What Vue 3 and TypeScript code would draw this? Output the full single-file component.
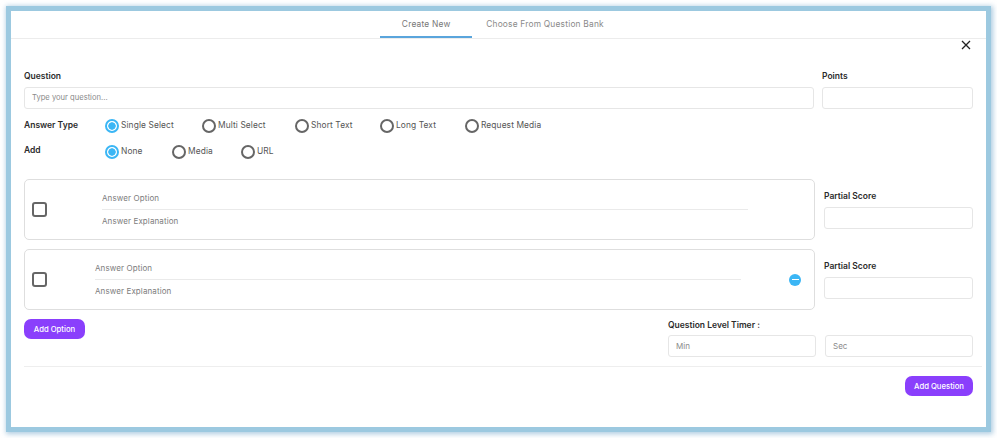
<script setup lang="ts">
const answerTypes = [
  { label: 'Single Select', checked: true, width: 97 },
  { label: 'Multi Select', checked: false, width: 93 },
  { label: 'Short Text', checked: false, width: 85 },
  { label: 'Long Text', checked: false, width: 85 },
  { label: 'Request Media', checked: false, width: 90 }
]
const addTypes = [
  { label: 'None', checked: true, width: 67 },
  { label: 'Media', checked: false, width: 69 },
  { label: 'URL', checked: false, width: 40 }
]
</script>

<template>
  <div class="page">
    <div class="modal">
      <nav class="tabs">
        <div class="tab active">Create New</div>
        <div class="tab">Choose From Question Bank</div>
      </nav>
      <button class="close" aria-label="Close">
        <svg width="10" height="10" viewBox="0 0 10 10"><path d="M1 1l8 8M9 1l-8 8" stroke="#222" stroke-width="1.3" fill="none" /></svg>
      </button>
      <div class="body">
        <div class="q-row">
          <div class="q-main">
            <div class="label">Question</div>
            <div class="input placeholder">Type your question...</div>
          </div>
          <div class="q-points">
            <div class="label">Points</div>
            <div class="input"></div>
          </div>
        </div>

        <div class="choice-row first">
          <div class="label row-label">Answer Type</div>
          <div class="choices">
            <div v-for="t in answerTypes" :key="t.label" class="choice" :style="{ width: t.width + 'px' }">
              <span class="radio" :class="{ on: t.checked }"></span>
              <span class="choice-text">{{ t.label }}</span>
            </div>
          </div>
        </div>
        <div class="choice-row second">
          <div class="label row-label">Add</div>
          <div class="choices">
            <div v-for="t in addTypes" :key="t.label" class="choice" :style="{ width: t.width + 'px' }">
              <span class="radio" :class="{ on: t.checked }"></span>
              <span class="choice-text">{{ t.label }}</span>
            </div>
          </div>
        </div>

        <div class="option-row top">
          <div class="card">
            <span class="check"></span>
            <div class="fields one">
              <div class="field-text">Answer Option</div>
              <div class="field-line"></div>
              <div class="field-text">Answer Explanation</div>
            </div>
          </div>
          <div class="partial">
            <div class="label">Partial Score</div>
            <div class="input"></div>
          </div>
        </div>

        <div class="option-row next">
          <div class="card">
            <span class="check"></span>
            <div class="fields two">
              <div class="field-text">Answer Option</div>
              <div class="field-line"></div>
              <div class="field-text">Answer Explanation</div>
            </div>
            <span class="minus"><i></i></span>
          </div>
          <div class="partial">
            <div class="label">Partial Score</div>
            <div class="input"></div>
          </div>
        </div>

        <div class="foot-row">
          <button class="btn option-btn">Add Option</button>
          <div class="timer">
            <div class="label">Question Level Timer :</div>
            <div class="timer-inputs">
              <div class="input">Min</div>
              <div class="input">Sec</div>
            </div>
          </div>
        </div>

        <div class="divider"></div>
        <div class="submit-row">
          <button class="btn question-btn">Add Question</button>
        </div>
      </div>
    </div>
  </div>
</template>

<style>
html, body { margin: 0; background: #fff; }
</style>

<style scoped>
* { box-sizing: border-box; }
.page {
  width: 997px;
  height: 438px;
  padding: 6px;
  font-family: "Inter", "Liberation Sans", sans-serif;
  color: #333;
  overflow: hidden;
}
.modal {
  position: relative;
  width: 985px;
  height: 426px;
  background: #fff;
  border: 5px solid #9cc9e0;
  box-shadow: 1px 1px 5px 1px rgba(120, 170, 205, 0.6);
}
.tabs {
  height: 28px;
  display: flex;
  justify-content: center;
  border-bottom: 1px solid #ececec;
  padding-left: 1px;
}
.tab {
  font-size: 8.4px;
  line-height: 26px;
  color: #8a8a8a;
  letter-spacing: 0.2px;
  padding: 0 14px;
  height: 27px;
}
.tab.active {
  width: 92px;
  text-align: center;
  padding: 0;
  border-bottom: 2px solid #5aa5dc;
  color: #777;
}
.close {
  position: absolute;
  top: 29px;
  right: 15px;
  width: 10px;
  height: 10px;
  padding: 0;
  border: 0;
  background: none;
  display: flex;
}
.body { padding: 31px 4px 0 13px; }
.label {
  font-size: 8.5px;
  font-weight: 600;
  line-height: 12px;
  color: #2b2b2b;
}
.input {
  height: 22px;
  border: 1px solid #e6e6e6;
  border-radius: 3px;
  font-size: 8px;
  line-height: 20px;
  color: #8a8a8a;
  padding: 0 7px;
  background: #fff;
}
.input.placeholder { font-size: 7.6px; }
.q-row { display: flex; gap: 8px; padding-right: 9px; }
.q-main { width: 790px; }
.q-points { width: 151px; }
.q-row .label { margin-bottom: 5px; }
.choice-row { display: flex; align-items: center; }
.choice-row.first { margin-top: 9px; height: 16px; }
.choice-row.second { margin-top: 10px; height: 16px; }
.row-label { width: 81px; margin-top: -2px; }
.second .row-label { margin-top: -4px; }
.choices { display: flex; }
.choice { display: flex; align-items: center; gap: 2px; }
.radio {
  width: 14px;
  height: 14px;
  border-radius: 50%;
  border: 2px solid #666;
  background: #fff;
  flex: none;
}
.radio.on {
  border-color: #3bb6f5;
  background: radial-gradient(circle, #3bb6f5 0 3.4px, #fff 4px);
}
.choice-text {
  font-size: 8.4px;
  line-height: 12px;
  color: #555;
  letter-spacing: 0.1px;
  margin-top: -3px;
}
.option-row { display: flex; align-items: flex-start; gap: 9px; }
.option-row.top { margin-top: 19px; }
.option-row.next { margin-top: 9px; }
.card {
  width: 791px;
  height: 61px;
  border: 1px solid #dedede;
  border-radius: 5px;
  display: flex;
  align-items: center;
  padding-left: 7px;
}
.check {
  width: 15px;
  height: 15px;
  border: 2px solid #666;
  border-radius: 3px;
  flex: none;
}
.fields { flex: none; }
.fields.one { margin-left: 55px; width: 646px; }
.fields.two { margin-left: 48px; width: 646px; }
.field-text {
  font-size: 8px;
  line-height: 12px;
  color: #7d7d7d;
  letter-spacing: 0.1px;
}
.field-line {
  height: 1px;
  background: #eaeaea;
  margin: 5px 0 5px;
}
.minus {
  width: 12px;
  height: 12px;
  border-radius: 50%;
  background: #3bb6f5;
  margin-left: 48px;
  display: flex;
  align-items: center;
  justify-content: center;
}
.minus i { width: 7px; height: 1.5px; background: #fff; display: block; }
.partial { width: 149px; padding-top: 11px; }
.partial .label { margin-bottom: 5px; }
.foot-row {
  display: flex;
  justify-content: space-between;
  padding-right: 9px;
  margin-top: 9px;
}
.btn {
  background: #8a3ffc;
  color: #fff;
  border: 0;
  border-radius: 7px;
  font-family: inherit;
  font-size: 7.7px;
  font-weight: 500;
  padding: 0;
  height: 20px;
}
.option-btn { width: 61px; }
.question-btn { width: 68px; }
.timer { width: 305px; }
.timer .label { margin-bottom: 4px; }
.timer-inputs { display: flex; gap: 9px; }
.timer-inputs .input { width: 148px; }
.divider { height: 1px; background: #eeeeee; margin-top: 9px; }
.submit-row { display: flex; justify-content: flex-end; padding: 9px 9px 0 0; }
</style>
